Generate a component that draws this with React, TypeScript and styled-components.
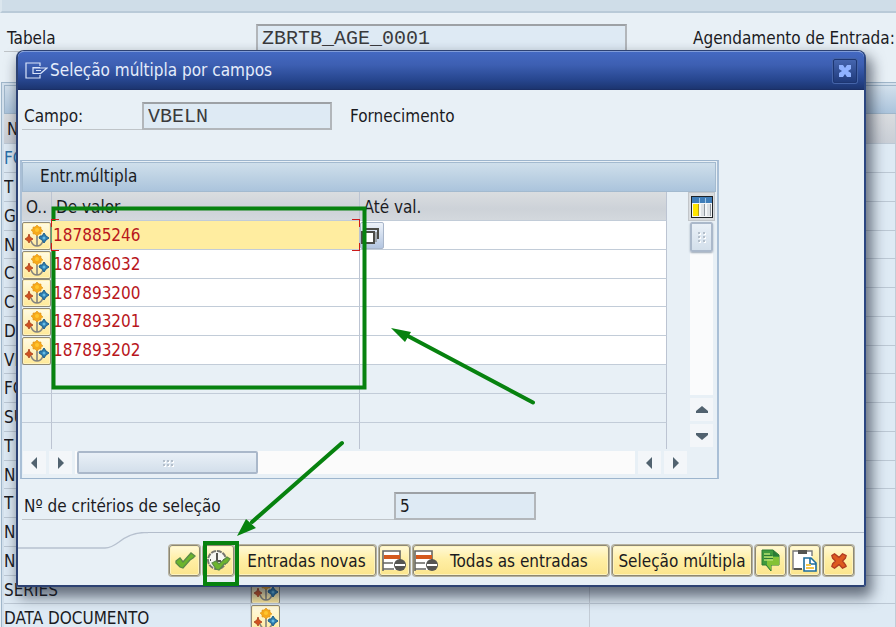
import React from 'react';
import styled, { createGlobalStyle, css } from 'styled-components';

const GlobalStyle = createGlobalStyle`
  *, *::before, *::after { box-sizing: border-box; }
  html, body { margin: 0; height: 100%; overflow: hidden; }
  body {
    background: #e8f0f6;
    color: #1b1b1f;
    font-family: "DejaVu Sans Condensed", "Noto Sans", sans-serif;
    font-size: 17px;
    line-height: 20px;
  }
  button, input { font: inherit; color: inherit; margin: 0; }
  #root { height: 100%; }
`;

const Screen = styled.div`
  position: relative;
  height: 100vh;
  overflow: hidden;
`;

const TopStrip = styled.div`
  height: 13px;
  background: #cfdde8;
  border-bottom: 2px solid #b9cad8;
  border-left: 2px solid #dbe6ee;
`;

const SelectionRow = styled.div`
  display: flex;
  align-items: flex-start;
  margin-top: 11px;
  height: 28px;
  white-space: nowrap;
`;

const rowLine = css`
  border-bottom: 1px solid #bfc4c8;
`;

const TabelaLabel = styled.label`
  flex: none;
  width: 252px;
  height: 28px;
  margin-left: 4px;
  padding: 4px 0 0 3px;
  ${rowLine}
`;

const Field = styled.input<{ $width: number; $mono?: boolean }>`
  flex: none;
  width: ${(p) => p.$width}px;
  height: 28px;
  padding: 0 4px;
  border: 2px solid #b2b6ba;
  border-top-color: #9da1a5;
  background: #deeaf4;
  outline: none;
  ${(p) =>
    p.$mono &&
    css`
      font-family: "Courier New", "Liberation Mono", monospace;
      font-size: 20px;
      && { color: #3a3a3c; }
    `}
`;

const RowNote = styled.span`
  padding-top: 4px;
  margin-left: 66px;
`;

const BackPanel = styled.section`
  margin: 30px -4px 0 1px;
  padding: 2px;
  border: 1px solid #9fb6ca;
  background: #d3e0ec;
`;

const BackTitle = styled.div`
  height: 29px;
  border: 1px solid #9fb6ca;
  background: linear-gradient(#d2e0ec, #abc4dc);
`;

const BackTable = styled.table`
  width: 100%;
  table-layout: fixed;
  border-collapse: separate;
  border-spacing: 0;
  background: #deeaf4;

  th, td {
    height: 29px;
    padding: 0;
    text-align: left;
    font-weight: 400;
    white-space: nowrap;
    overflow: hidden;
    border-right: 1px solid #c3ccd6;
    border-bottom: 1px solid #bcc8d4;
  }
  th { background: linear-gradient(#d9dcdf, #c9ced6); padding-left: 3px; height: 30px; }
  tr:nth-child(4n) td { height: 28px; }
  tr:first-child td { color: #2a6fa8; }
  td:nth-child(2) { border-right: 0; }
`;

const Dialog = styled.div`
  position: absolute;
  top: 50px;
  left: 16px;
  right: 30px;
  border: 2px solid #2d4273;
  border-top-width: 1px;
  border-right-color: #2b4680;
  border-radius: 8px 8px 3px 3px;
  background: #e8f0f6;
  box-shadow: 4px 8px 14px 2px rgba(20, 28, 45, 0.6);
`;

const TitleBar = styled.header`
  display: flex;
  align-items: center;
  height: 39px;
  padding: 0 7px 0 7px;
  border-top: 1px solid #7f9bd8;
  border-bottom: 1px solid #1b2f66;
  border-radius: 6px 6px 0 0;
  background: linear-gradient(#4469c2, #3d5fb2 35%, #27468f 75%, #1c3570);
  color: #e4ecfb;
`;

const Title = styled.h1`
  flex: 1;
  margin: 0 0 2px 2px;
  font-size: 17px;
  font-weight: 400;
`;

const CloseButton = styled.button`
  display: grid;
  place-items: center;
  width: 24px;
  height: 24px;
  padding: 0;
  border: 1px solid #1d3672;
  border-radius: 2px;
  background: linear-gradient(#4565ae, #203b7c);
  box-shadow: 0 0 0 1px #4564a8;
`;

const Body = styled.div`
  padding: 12px 0 0 4px;
`;

const FormRow = styled.div`
  display: flex;
  height: 28px;
  white-space: nowrap;
`;

const FormLabel = styled.label<{ $width: number }>`
  flex: none;
  width: ${(p) => p.$width}px;
  padding: 4px 0 0 2px;
  ${rowLine}
`;

const FieldNote = styled.span`
  padding: 4px 0 0 18px;
`;

const Panel = styled.section`
  max-width: 699px;
  margin: 30px 0 13px -2px;
  padding: 1px 1px 1px 0;
  border: 1px solid #9db5cd;
  border-left: 2px solid #a9bfd6;
  border-right: 2px solid #a9bfd6;
`;

const PanelTitle = styled.h2`
  margin: 0;
  height: 30px;
  padding: 3px 0 0 17px;
  border: 1px solid #a3bacf;
  background: linear-gradient(#cfdfeb, #abc4dc);
  font-size: 17px;
  font-weight: 400;
`;

const GridArea = styled.div`
  display: flex;
  height: 257px;
`;

const GridWrap = styled.div`
  flex: 1;
  min-width: 0;
`;

const Grid = styled.table`
  width: 100%;
  table-layout: fixed;
  border-collapse: separate;
  border-spacing: 0;

  th, td {
    position: relative;
    height: 29px;
    padding: 0;
    border-right: 1px solid #bcc4d2;
    border-bottom: 1px solid #c2ccd8;
  }
  tr:nth-child(3) td { height: 28px; }
  tr:last-child td { border-bottom: 0; height: 26px; }
  th {
    padding: 2px 0 0 4px;
    font-weight: 400;
    text-align: left;
    white-space: nowrap;
    background: linear-gradient(#dadde0, #cdd2d8 60%, #d3d8dd);
    line-height: 20px;
  }
`;

const ValueCell = styled.td<{ $tone: 'active' | 'filled' | 'empty' }>`
  background: ${(p) => (p.$tone === 'active' ? '#ffeda0' : p.$tone === 'filled' ? '#fff' : 'transparent')};
  z-index: ${(p) => (p.$tone === 'active' ? 1 : 'auto')};
`;

const ValueInput = styled.input`
  display: block;
  width: 100%;
  height: 26px;
  padding: 0 0 0 1px;
  border: 0;
  outline: none;
  background: transparent;
  && { color: #b8161c; }
`;

const Corner = styled.i<{ $v: 'top' | 'bottom'; $h: 'left' | 'right' }>`
  position: absolute;
  ${(p) => p.$v}: -2px;
  ${(p) => p.$h}: -1px;
  width: 8px;
  height: 8px;
  border: 0 solid #cc1a1a;
  border-${(p) => p.$v}-width: 1px;
  border-${(p) => p.$h}-width: 1px;
`;

const OptionButton = styled.button`
  display: grid;
  place-items: center;
  width: 29px;
  height: 28px;
  margin-bottom: -1px;
  padding: 0;
  border: 1px solid #8f8a78;
  border-radius: 2px;
  background: linear-gradient(#fffbe4, #ffe998);
  box-shadow: inset 0 0 0 1px #fff2bc;
`;

const CopyButton = styled.button`
  position: absolute;
  top: 1px;
  left: 0;
  display: grid;
  place-items: center;
  width: 24px;
  height: 27px;
  padding: 0 4px 0 0;
  border: 1px solid #a9b6ca;
  border-radius: 2px;
  background: linear-gradient(#eef3fa, #b3c5e0);
`;

const SideRail = styled.div`
  flex: none;
  display: flex;
  flex-direction: column;
  align-items: center;
  width: 49px;
  padding: 0 1px 2px 21px;
`;

const ConfigButton = styled.button`
  flex: none;
  width: 27px;
  height: 29px;
  padding: 0;
  display: grid;
  place-items: center;
  border: 1px solid #c2c6ca;
  background: #d9dcdf;
`;

const VTrack = styled.div`
  flex: 1;
  width: 23px;
  background: #fafbfc;
  margin-top: 1px;
`;

const thumb = css`
  display: grid;
  place-items: center;
  padding: 0;
  border: 2px solid #aab8ca;
  border-radius: 2px;
  background: linear-gradient(#e9f0f7, #d3dfeb);
`;

const VThumb = styled.button`
  ${thumb}
  width: 23px;
  height: 30px;
  box-shadow: 0 1px 2px #9aa7b6;
`;

const ArrowButton = styled.button`
  flex: none;
  display: grid;
  place-items: center;
  width: 23px;
  height: 23px;
  padding: 0;
  border: 0;
  background: #f3f6f9;
`;

const VArrow = styled(ArrowButton)`
  margin-top: 3px;
`;

const HBar = styled.div`
  display: flex;
  gap: 3px;
  height: 28px;
  padding: 2px 29px 3px 1px;
`;

const HTrack = styled.div`
  flex: 1;
  background: #fbfbfb;
  padding-left: 2px;
`;

const HThumb = styled.button`
  ${thumb}
  width: 181px;
  height: 23px;
`;

const Footer = styled.footer`
  display: flex;
  align-items: flex-start;
  margin-top: 12px;
`;

const Shoulder = styled.svg`
  flex: none;
  width: 130px;
  height: 18px;
`;

const Actions = styled.div`
  flex: 1;
  display: flex;
  justify-content: flex-end;
  gap: 3px;
  padding: 12px 10px 9px 0;
  border-top: 1px solid #b3bdcb;
  white-space: nowrap;
`;

const Action = styled.button<{ $width?: number; $icon?: boolean }>`
  flex: none;
  display: flex;
  align-items: center;
  justify-content: ${(p) => (p.$icon ? 'flex-start' : 'center')};
  gap: 11px;
  width: ${(p) => p.$width ?? 31}px;
  height: 31px;
  padding: 0;
  border: 1px solid #8d8874;
  border-radius: 3px;
  background: linear-gradient(#fff9d8, #ffefa6 45%, #fbe58d);
  box-shadow: inset 0 0 0 1px #fdf3c0, 0 0 0 1px #b5b19f;
`;

const Annotations = styled.svg`
  position: absolute;
  top: 0;
  left: 0;
  width: 896px;
  height: 627px;
  pointer-events: none;
`;

const OptionIcon = () => (
  <svg width="26" height="24" viewBox="0 0 26 24" aria-hidden="true">
    <path d="M13 10V22M7 17q2 5 6 5q4 0 6-5" fill="none" stroke="#85847e" strokeWidth="1.6" />
    <path d="M13 1l2 2h2v2l2 2-2 1v2h-2l-2 2-2-2H9V8L7 6l2-1V3h2z" fill="#f6a91b" stroke="#df951a" strokeWidth="0.6" />
    <circle cx="13" cy="6" r="2" fill="#ffc62d" />
    <path d="M5 10l1 3 3 2-3 2-1 2-1-2-3-2 3-2z" fill="#d0521f" stroke="#a83c1c" strokeWidth="0.8" />
    <path d="M20 9l2 3 3 2-3 2-2 3-2-3-3-2 1-2h2z" fill="#2d7cae" stroke="#1b5f91" />
    <circle cx="20" cy="14" r="1.5" fill="#69bde4" />
  </svg>
);

const ExitIcon = () => (
  <svg width="23" height="18" viewBox="0 0 23 18" fill="none" stroke="#d9e4fa" strokeWidth="1.2" aria-hidden="true">
    <path d="M15 4V1H1v15h14v-3" />
    <path d="M15 5.5H8v6h7M8 6h14l-7 6M11 8.500h5" />
  </svg>
);

const CloseIcon = () => (
  <svg width="14" height="14" viewBox="0 0 14 14" aria-hidden="true">
    <path d="M1 1h4l2 3 2-3h4v4l-3 2 3 2v4H9l-2-3-2 3H1V9l3-2-3-2z" fill="#8fb2ff" />
  </svg>
);

const CopyIcon = () => (
  <svg width="18" height="18" viewBox="0 0 18 18" fill="none" stroke="#4c4c48" strokeWidth="2" aria-hidden="true">
    <path d="M4 2h13v10" />
    <path d="M1 5h12v11H1z" fill="#fff" />
    <path d="M15 5v10" stroke="#77776f" strokeWidth="1" />
  </svg>
);

const ConfigIcon = () => (
  <svg width="22" height="22" viewBox="0 0 22 22" aria-hidden="true">
    <rect width="22" height="22" fill="#1e2226" />
    <rect x="1" y="1" width="20" height="6" fill="#3f7db9" />
    <path d="M1 7h20v14H1z" fill="#f4f6f8" />
    <path d="M2 8h6v12H2z" fill="#ffe600" />
    <path d="M7 8h1v12H7z" fill="#b79f1a" />
    <path d="M10 8h4v12h-4zM16 8h4v12h-4z" fill="#dde1e5" />
    <path d="M13 8h1v12h-1zM19 8h1v12h-1z" fill="#8f979e" />
    <path d="M8 2h1v5H8zM14 2h1v5h-1z" fill="#9cc3e4" />
  </svg>
);

const Grip = ({ vertical = false }: { vertical?: boolean }) => {
  const xs = vertical ? [1, 6] : [1, 5, 9];
  const ys = vertical ? [1, 5, 9] : [1, 5];
  return (
    <svg width="12" height="12" viewBox={vertical ? '-1 0 12 12' : '0 -2 12 12'} aria-hidden="true">
      {xs.flatMap((x) =>
        ys.map((y) => (
          <g key={`${x}-${y}`}>
            <rect x={x + 1} y={y + 1} width="2" height="2" fill="#fff" />
            <rect x={x} y={y} width="2" height="2" fill="#b4bfcb" />
          </g>
        )),
      )}
    </svg>
  );
};

const arrowPaths = {
  left: 'M9 1v12L3 7z',
  right: 'M4 1v12l6-6z',
  up: 'M7 3l6 5v2H1V8z',
  down: 'M7 11L1 6V4h12v2z',
};

const Arrow = ({ dir }: { dir: keyof typeof arrowPaths }) => (
  <svg width="14" height="14" viewBox="0 0 14 14" aria-hidden="true">
    <path d={arrowPaths[dir]} fill="#51626f" />
  </svg>
);

const check = 'M2 10l4-3 3 4 8-9 4 3-2 2-3 2-7 8-3-1-4-4z';

const CheckIcon = () => (
  <svg width="22" height="20" viewBox="0 0 22 20" aria-hidden="true">
    <path d={check} fill="#6cb52d" stroke="#5a8a48" strokeWidth="1.3" />
  </svg>
);

const ClockCheckIcon = () => (
  <svg width="27" height="26" viewBox="0 0 27 26" aria-hidden="true">
    <circle cx="12" cy="12" r="9" fill="#f7f7f2" stroke="#77776f" strokeWidth="2" strokeDasharray="5 1" />
    <path d="M12 5v8h4M5 12h1M18 12h2" stroke="#55554f" strokeWidth="2" fill="none" />
    <path d="M7 15l4-2 3 3 8-7 3 2-3 4-3 1-5 6-3-1z" fill="#6cb52d" stroke="#5a8a48" strokeWidth="1.2" />
  </svg>
);

const DeleteRowIcon = () => (
  <svg width="25" height="24" viewBox="0 0 25 24" aria-hidden="true">
    <path d="M1 1h17v20H1z" fill="#fff" />
    <path d="M1 22V2h17v12M1 14h10M1 20h11" fill="none" stroke="#666661" strokeWidth="1.6" />
    <path d="M2 6h16v4H2z" fill="#d4591d" />
    <circle cx="18" cy="16" r="6" fill="#555552" />
    <path d="M13 16h10" stroke="#fff" strokeWidth="2" />
  </svg>
);

const NoteIcon = () => (
  <svg width="20" height="24" viewBox="0 0 20 24" aria-hidden="true">
    <path d="M1 1h11l6 5v10h-8v6l-5-6H1z" fill="#3f9a3c" stroke="#2b7a35" />
    <path d="M6 8h12v8h-8v5l-4-5z" fill="#84c236" />
    <path d="M12 1v6h6z" fill="#2b7a35" />
    <path d="M3 5h6M3 8h9M3 11h9" stroke="#b4e070" strokeWidth="1.3" />
    <path d="M3 6.500h8M3 9.500h9" stroke="#2b7a35" />
  </svg>
);

const PasteIcon = () => (
  <svg width="26" height="24" viewBox="0 0 26 24" aria-hidden="true">
    <path d="M1 2h19v18H1z" fill="#fff" />
    <path d="M9 20H1V2h5M15 2h5v5" fill="none" stroke="#77777a" strokeWidth="1.4" />
    <path d="M2 19h8v2H2z" fill="#555552" />
    <path d="M6 1h9v4H6z" fill="#555552" />
    <path d="M12 9h7l5 5v8H12z" fill="#fff" stroke="#1d6c9c" strokeWidth="1.6" />
    <path d="M18 9v6h6" fill="none" stroke="#1d6c9c" strokeWidth="1.6" />
    <path d="M14 16h5M14 19h8" stroke="#f3c64a" strokeWidth="2" />
  </svg>
);

const CancelIcon = () => (
  <svg width="18" height="18" viewBox="0 0 20 20" aria-hidden="true">
    <path
      d="M2 4l3-2 5 4 4-4 4 2-1 3-3 3 3 4 1 2-4 2-4-4-5 4-3-2 1-3 3-3-3-3z"
      fill="#dd5a1f"
      stroke="#b23c22"
      strokeWidth="1.5"
      strokeLinejoin="round"
    />
  </svg>
);

const backRows = [
  'FO', 'T', 'G', 'N', 'CL', 'CL', 'D', 'VL', 'FO', 'SU', 'T', 'N', 'T', 'N', 'NO',
  'SERIES', 'DATA DOCUMENTO',
];

const values = ['187885246', '187886032', '187893200', '187893201', '187893202', '', '', ''];

const BackWindow = () => (
  <>
    <TopStrip />
    <SelectionRow>
      <TabelaLabel htmlFor="tabela">Tabela</TabelaLabel>
      <Field id="tabela" $width={371} $mono readOnly value="ZBRTB_AGE_0001" />
      <RowNote>Agendamento de Entrada:</RowNote>
    </SelectionRow>
    <BackPanel>
      <BackTitle />
      <BackTable>
        <colgroup>
          <col width="247" />
          <col width="31" />
          <col width="308" />
          <col width="306" />
          <col />
        </colgroup>
        <thead>
          <tr>
            <th>N</th>
            <th />
            <th />
            <th />
            <th />
          </tr>
        </thead>
        <tbody>
          {backRows.map((label, i) => (
            <tr key={i}>
              <td>{label}</td>
              <td>
                <OptionButton aria-label={`Opção ${label}`}>
                  <OptionIcon />
                </OptionButton>
              </td>
              <td />
              <td />
              <td />
            </tr>
          ))}
        </tbody>
      </BackTable>
    </BackPanel>
  </>
);

const EntriesGrid = () => (
  <Panel>
    <PanelTitle>Entr.múltipla</PanelTitle>
    <GridArea>
      <GridWrap>
        <Grid>
          <colgroup>
            <col width="30" />
            <col />
            <col />
          </colgroup>
          <thead>
            <tr>
              <th>O..</th>
              <th>De valor</th>
              <th>Até val.</th>
            </tr>
          </thead>
          <tbody>
            {values.map((value, i) => {
              const tone = i === 0 ? 'active' : value ? 'filled' : 'empty';
              return (
                <tr key={i}>
                  <td>
                    {value && (
                      <OptionButton aria-label="Opções de seleção">
                        <OptionIcon />
                      </OptionButton>
                    )}
                  </td>
                  <ValueCell $tone={tone}>
                    {value && <ValueInput aria-label={`De valor ${i + 1}`} defaultValue={value} />}
                    {i === 0 && (
                      <>
                        <Corner $v="top" $h="left" />
                        <Corner $v="top" $h="right" />
                        <Corner $v="bottom" $h="left" />
                        <Corner $v="bottom" $h="right" />
                      </>
                    )}
                  </ValueCell>
                  <ValueCell $tone={value ? 'filled' : 'empty'}>
                    {i === 0 && (
                      <CopyButton aria-label="Ajuda de pesquisa">
                        <CopyIcon />
                      </CopyButton>
                    )}
                  </ValueCell>
                </tr>
              );
            })}
          </tbody>
        </Grid>
      </GridWrap>
      <SideRail>
        <ConfigButton aria-label="Configuração">
          <ConfigIcon />
        </ConfigButton>
        <VTrack>
          <VThumb aria-label="Rolagem vertical">
            <Grip vertical />
          </VThumb>
        </VTrack>
        <VArrow aria-label="Para cima">
          <Arrow dir="up" />
        </VArrow>
        <VArrow aria-label="Para baixo">
          <Arrow dir="down" />
        </VArrow>
      </SideRail>
    </GridArea>
    <HBar>
      <ArrowButton aria-label="Para a esquerda">
        <Arrow dir="left" />
      </ArrowButton>
      <ArrowButton aria-label="Para a direita">
        <Arrow dir="right" />
      </ArrowButton>
      <HTrack>
        <HThumb aria-label="Rolagem horizontal">
          <Grip />
        </HThumb>
      </HTrack>
      <ArrowButton aria-label="Coluna à esquerda">
        <Arrow dir="left" />
      </ArrowButton>
      <ArrowButton aria-label="Coluna à direita">
        <Arrow dir="right" />
      </ArrowButton>
    </HBar>
  </Panel>
);

export default function App() {
  return (
    <Screen>
      <GlobalStyle />
      <BackWindow />
      <Dialog role="dialog" aria-labelledby="dialog-title">
        <TitleBar>
          <ExitIcon />
          <Title id="dialog-title">Seleção múltipla por campos</Title>
          <CloseButton aria-label="Fechar">
            <CloseIcon />
          </CloseButton>
        </TitleBar>
        <Body>
          <FormRow>
            <FormLabel htmlFor="campo" $width={120}>Campo:</FormLabel>
            <Field id="campo" $width={190} $mono readOnly value="VBELN" />
            <FieldNote>Fornecimento</FieldNote>
          </FormRow>
          <EntriesGrid />
          <FormRow>
            <FormLabel htmlFor="criterios" $width={372}>Nº de critérios de seleção</FormLabel>
            <Field id="criterios" $width={142} readOnly value="5" />
          </FormRow>
        </Body>
        <Footer>
          <Shoulder viewBox="0 0 130 18" aria-hidden="true">
            <path d="M0 16H87Q93 16 101 10Q112 1 126 0.5H130" fill="none" stroke="#b7c1cf" strokeWidth="1.3" />
          </Shoulder>
          <Actions>
            <Action aria-label="Confirmar">
              <CheckIcon />
            </Action>
            <Action aria-label="Executar">
              <ClockCheckIcon />
            </Action>
            <Action $width={139}>Entradas novas</Action>
            <Action aria-label="Eliminar linha">
              <DeleteRowIcon />
            </Action>
            <Action $width={196} $icon>
              <DeleteRowIcon />
              Todas as entradas
            </Action>
            <Action $width={140}>Seleção múltipla</Action>
            <Action aria-label="Importar de arquivo">
              <NoteIcon />
            </Action>
            <Action aria-label="Colar da área de transferência">
              <PasteIcon />
            </Action>
            <Action aria-label="Cancelar">
              <CancelIcon />
            </Action>
          </Actions>
        </Footer>
      </Dialog>
      <Annotations viewBox="0 0 896 627" aria-hidden="true">
        <g fill="none" stroke="#07820f" strokeWidth="4" strokeLinecap="round">
          <rect x="53.5" y="208.5" width="311" height="179" />
          <rect x="205" y="543" width="32" height="41" />
          <path d="M533 402.500L406 335M342 443L252 522" />
        </g>
        <path d="M391 328L411 332L405 342zM237 536L246 519L256 528z" fill="#07820f" />
      </Annotations>
    </Screen>
  );
}
